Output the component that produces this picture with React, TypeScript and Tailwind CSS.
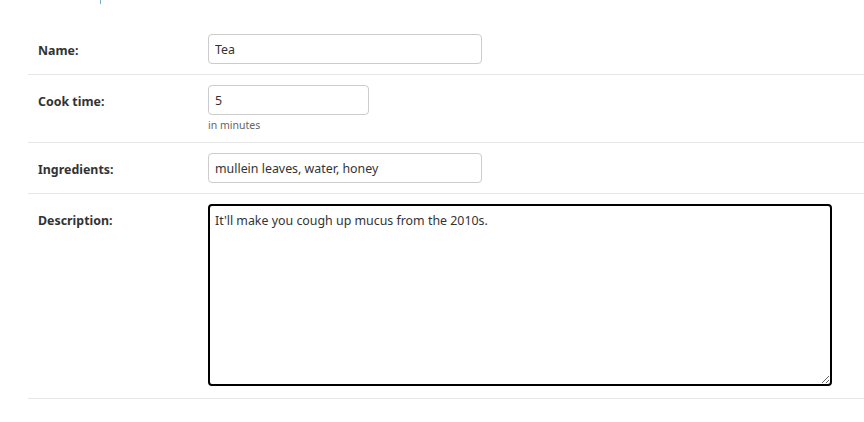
const font = "font-['Segoe_UI','Noto_Sans','Open_Sans',sans-serif]"

function Row({
  label,
  children,
  last = false,
}: {
  label: string
  children: React.ReactNode
  last?: boolean
}) {
  return (
    <div className={`flex border-b border-[#e6e6e6] pt-[10px] pl-[10px] ${last ? "pb-[12px]" : "pb-[10px]"}`}>
      <label className="w-[170px] shrink-0 pt-[8px] text-[12.4px] leading-[18px] font-bold text-[#333]">
        {label}
      </label>
      <div className="flex flex-col">{children}</div>
    </div>
  )
}

const inputCls =
  "h-[30px] rounded-[4px] border border-[#cccccc] bg-white px-[6px] text-[12.4px] text-[#333] outline-none"

export default function App() {
  return (
    <div className={`h-[422px] w-[864px] overflow-hidden bg-white ${font}`}>
      <div className="h-[24px] pl-[100px]">
        <div className="h-[4px] w-px bg-[#79aec8]" />
      </div>
      <div className="pl-[28px]">
        <Row label="Name:">
          <input className={`${inputCls} w-[274px]`} defaultValue="Tea" />
        </Row>
        <Row label="Cook time:">
          <input className={`${inputCls} w-[161px]`} defaultValue="5" />
          <span className="mt-[3px] text-[10.5px] leading-[14px] text-[#666]">in minutes</span>
        </Row>
        <Row label="Ingredients:">
          <input className={`${inputCls} w-[274px]`} defaultValue="mullein leaves, water, honey" />
        </Row>
        <Row label="Description:" last>
          <textarea
            className="h-[182px] w-[624px] rounded-[4px] border-2 border-black bg-white px-[5px] pt-[6px] pb-[4px] text-[12.4px] leading-[18px] text-[#333] outline-none"
            defaultValue="It'll make you cough up mucus from the 2010s."
          />
        </Row>
      </div>
    </div>
  )
}
